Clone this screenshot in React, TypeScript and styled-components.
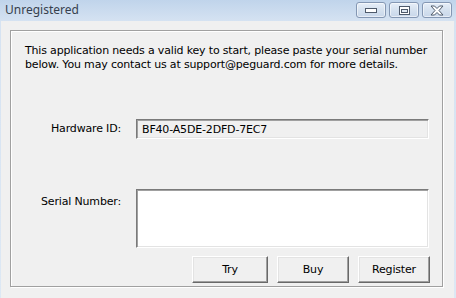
import React from 'react';
import styled, { createGlobalStyle } from 'styled-components';

const GlobalStyle = createGlobalStyle`
  html, body {
    margin: 0;
    padding: 0;
    background: #ffffff;
  }
`;

const Window = styled.div`
  width: 456px;
  height: 298px;
  display: flex;
  flex-direction: column;
  background: linear-gradient(to bottom, #c0d4eb 0px, #d6e3f2 22px, #dde8f4 100%);
  font-family: Tahoma, 'DejaVu Sans', 'Liberation Sans', sans-serif;
  overflow: hidden;
`;

const TitleBar = styled.div`
  height: 21px;
  flex: none;
  display: flex;
  align-items: flex-start;
  justify-content: space-between;
`;

const Title = styled.span`
  margin: 2px 0 0 5px;
  font-family: 'Noto Sans', 'Open Sans', sans-serif;
  font-size: 12px;
  line-height: 16px;
  color: #36404d;
`;

const Caption = styled.div`
  display: flex;
  gap: 3px;
  margin: 2px 4px 0 0;
`;

const CaptionButton = styled.div`
  width: 30px;
  height: 16px;
  box-sizing: border-box;
  border: 1px solid #8497b3;
  border-radius: 3px;
  background: linear-gradient(to bottom, #e6eef8 0%, #d5e1ef 50%, #c8d7ea 100%);
  box-shadow: inset 0 0 0 1px rgba(255, 255, 255, 0.55);
  display: flex;
  align-items: center;
  justify-content: center;
`;

const Client = styled.div`
  flex: 1;
  margin: 0 2px 0 1px;
  background: #f0f0f0;
  padding: 9px 0 0 9px;
  letter-spacing: -0.17px;
`;

const GroupBox = styled.div`
  width: 431px;
  height: 255px;
  border: 1px solid #a0a0a0;
  box-shadow: 1px 1px 0 #ffffff, inset 1px 1px 0 #ffffff;
  display: flex;
  flex-direction: column;
`;

const Message = styled.p`
  margin: 13px 0 0 14px;
  font-size: 11px;
  line-height: 14px;
  color: #000000;
`;

const Form = styled.div`
  margin: 47px 0 0 0;
  display: grid;
  grid-template-columns: 110px 293px;
  column-gap: 15px;
  align-items: start;
`;

const Label = styled.label<{ $offset: number }>`
  justify-self: end;
  margin-top: ${({ $offset }) => $offset}px;
  font-size: 11px;
  line-height: 14px;
  color: #000000;
`;

const Field = styled.div<{ $height: number; $bg: string }>`
  height: ${({ $height }) => $height}px;
  box-sizing: border-box;
  background: ${({ $bg }) => $bg};
  border-style: solid;
  border-width: 1px;
  border-color: #7a7a7a #ffffff #ffffff #7a7a7a;
  box-shadow: inset 1px 1px 0 #a0a0a0, inset -1px -1px 0 #e3e3e3;
  padding: 3px 5px;
  font-size: 11px;
  line-height: 13px;
  color: #000000;
`;

const Spacer = styled.div<{ $h: number }>`
  grid-column: 1 / -1;
  height: ${({ $h }) => $h}px;
`;

const Buttons = styled.div`
  grid-column: 1 / -1;
  display: flex;
  justify-content: flex-end;
  gap: 9px;
  margin-right: -1px;
`;

const Button = styled.button<{ $w: number }>`
  width: ${({ $w }) => $w}px;
  height: 27px;
  box-sizing: border-box;
  background: #f0f0f0;
  border-style: solid;
  border-width: 1px;
  border-color: #ffffff #696969 #696969 #ffffff;
  box-shadow: inset -1px -1px 0 #a0a0a0, inset 1px 1px 0 #e3e3e3;
  font-family: Tahoma, 'DejaVu Sans', 'Liberation Sans', sans-serif;
  font-size: 11px;
  letter-spacing: -0.17px;
  color: #000000;
  padding: 0;
`;

const MinIcon = () => (
  <svg width="12" height="6" viewBox="0 0 12 6">
    <rect x="0.5" y="1.5" width="11" height="4" fill="#ffffff" stroke="#4e5a6b" />
  </svg>
);

const MaxIcon = () => (
  <svg width="11" height="9" viewBox="0 0 11 9">
    <rect x="0.5" y="0.5" width="10" height="8" fill="#ffffff" stroke="#4e5a6b" />
    <rect x="2.5" y="3.5" width="6" height="3" fill="#dfe8f3" stroke="#4e5a6b" />
  </svg>
);

const CloseIcon = () => (
  <svg width="14" height="11" viewBox="0 0 14 11">
    <path
      d="M1 1 H4.5 L7 3.5 L9.5 1 H13 L9 5.5 L13 10 H9.5 L7 7.5 L4.5 10 H1 L5 5.5 Z"
      fill="#ffffff"
      stroke="#4e5a6b"
      strokeLinejoin="round"
    />
  </svg>
);

export default function App() {
  return (
    <>
      <GlobalStyle />
      <Window>
        <TitleBar>
          <Title>Unregistered</Title>
          <Caption>
            <CaptionButton>
              <MinIcon />
            </CaptionButton>
            <CaptionButton>
              <MaxIcon />
            </CaptionButton>
            <CaptionButton>
              <CloseIcon />
            </CaptionButton>
          </Caption>
        </TitleBar>
        <Client>
          <GroupBox>
            <Message>
              This application needs a valid key to start, please paste your serial number
              <br />
              below. You may contact us at support@peguard.com for more details.
            </Message>
            <Form>
              <Label $offset={3}>Hardware ID:</Label>
              <Field $height={20} $bg="#f0f0f0">BF40-A5DE-2DFD-7EC7</Field>
              <Spacer $h={50} />
              <Label $offset={6}>Serial Number:</Label>
              <Field $height={59} $bg="#ffffff" />
              <Spacer $h={8} />
              <Buttons>
                <Button $w={76}>Try</Button>
                <Button $w={72}>Buy</Button>
                <Button $w={72}>Register</Button>
              </Buttons>
            </Form>
          </GroupBox>
        </Client>
      </Window>
    </>
  );
}
